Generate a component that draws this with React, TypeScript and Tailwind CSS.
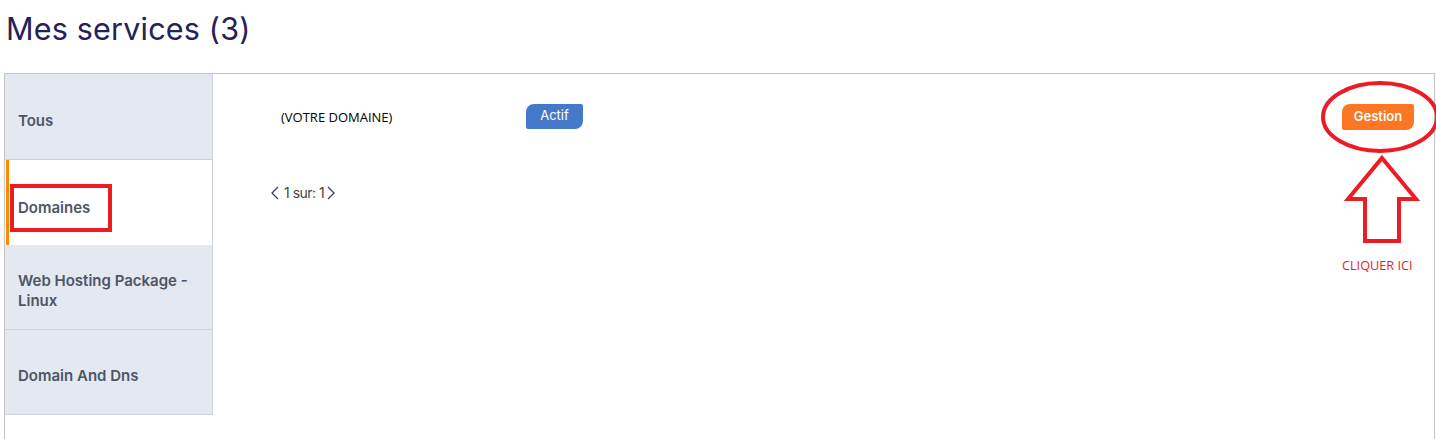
import React from "react";

const tabs = [
  { label: "Tous", active: false, h: "h-[86px]" },
  { label: "Domaines", active: true, h: "h-[85px]" },
  { label: "Web Hosting Package - Linux", active: false, h: "h-[85px]" },
  { label: "Domain And Dns", active: false, h: "h-[85px]" },
];

export default function App() {
  return (
    <div className="w-[1436px] h-[439px] overflow-hidden bg-white" style={{ fontFamily: "Inter, 'Noto Sans', sans-serif" }}>
      <h1 className="pl-[6px] pt-[10px] h-[73px] text-[30.5px] leading-[38px] text-[#24215c] font-normal tracking-[0.2px]">
        Mes services (3)
      </h1>
      <div className="ml-[4px] mr-[1px] h-[400px] border-t border-l border-r border-[#c3c3c3] flex">
        <div className="w-[208px] flex flex-col shrink-0">
          {tabs.map((t) =>
            t.active ? (
              <div key={t.label} className={`relative ${t.h} bg-white border-r border-[#cdd4de] flex items-center`}>
                <div className="absolute left-[1px] top-0 bottom-0 w-[3px] bg-[#ff8a00]" />
                <div className="relative ml-[5px] mt-[11px] w-[102px] h-[48px] border-[4px] border-[#ec1c24] flex items-center pl-[4px]">
                  <span className="text-[15px] font-semibold text-[#4d5567]">{t.label}</span>
                </div>
              </div>
            ) : (
              <div key={t.label} className={`${t.h} bg-[#e4e8f0] border-r border-b border-[#cdd4de] flex items-center pl-[13px] pr-[10px] pt-[8px]`}>
                <span className="text-[15px] leading-[20px] font-semibold text-[#4d5567]">{t.label}</span>
              </div>
            )
          )}
        </div>
        <div className="flex-1 relative">
          <div className="flex items-center h-[86px] pt-[2px]">
            <span className="ml-[68px] w-[245px] text-[13px] text-black" style={{ fontFamily: "'Open Sans', sans-serif" }}>
              (VOTRE DOMAINE)
            </span>
            <span className="h-[25px] w-[57px] -mt-[4px] bg-[#4479c9] text-white text-[13px] flex items-center justify-center rounded-tl-[8px] rounded-br-[8px] rounded-tr-[2px] rounded-bl-[2px]">
              Actif
            </span>
            <div className="flex-1" />
            <span className="mr-[20px] -mt-[3px] h-[26px] w-[72px] bg-[#fd7624] text-white text-[13px] font-semibold flex items-center justify-center rounded-tl-[8px] rounded-br-[8px] rounded-tr-[2px] rounded-bl-[2px]">
              Gestion
            </span>
          </div>
          <div className="ml-[57px] mt-[22px] flex items-center gap-[2px] text-[14px] text-[#444] tracking-[-0.5px]">
            <svg width="10" height="14" viewBox="0 0 10 14" className="mr-[2px]">
              <path d="M8 1 L2 7 L8 13" fill="none" stroke="#3b3b6b" strokeWidth="1.3" />
            </svg>
            <span>1 sur: 1</span>
            <svg width="10" height="14" viewBox="0 0 10 14">
              <path d="M2 1 L8 7 L2 13" fill="none" stroke="#3b3b6b" strokeWidth="1.3" />
            </svg>
          </div>
          <svg className="absolute left-[1102px] top-[6px]" width="126" height="180" viewBox="0 0 126 180">
            <ellipse cx="65" cy="37" rx="57" ry="34" fill="none" stroke="#ec1c24" strokeWidth="4" />
            <path d="M67 78 L101 119 L84 119 L84 161 L50 161 L50 119 L33 119 Z" fill="none" stroke="#ec1c24" strokeWidth="4" strokeLinejoin="miter" />
          </svg>
          <span className="absolute left-[1129px] top-[182px] text-[12.7px] text-[#ec1c24]" style={{ fontFamily: "'Open Sans', sans-serif" }}>
            CLIQUER ICI
          </span>
        </div>
      </div>
    </div>
  );
}
